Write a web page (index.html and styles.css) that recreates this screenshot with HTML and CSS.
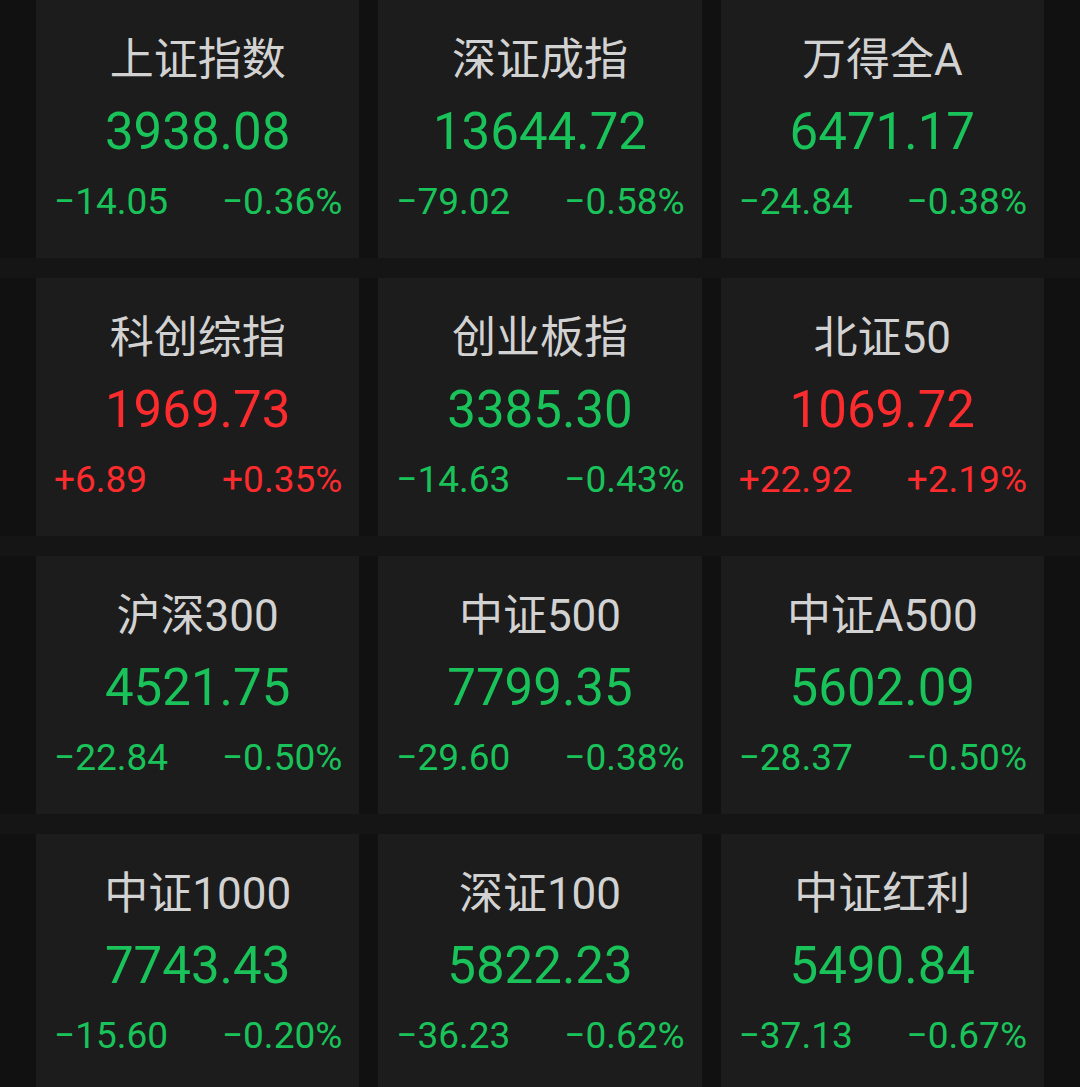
FILE: index.html
```html
<!DOCTYPE html>
<html lang="zh-CN">
<head>
    <meta charset="UTF-8">
    <meta name="viewport" content="width=device-width, initial-scale=1.0">
    <title>指数行情</title>
    <link rel="stylesheet" href="styles.css">
</head>
<body>
    <div class="board">
        <div class="row">
            <div class="card down">
                <div class="name">上证指数</div>
                <div class="price">3938.08</div>
                <div class="change"><span>−14.05</span><span>−0.36%</span></div>
            </div>
            <div class="card down">
                <div class="name">深证成指</div>
                <div class="price">13644.72</div>
                <div class="change"><span>−79.02</span><span>−0.58%</span></div>
            </div>
            <div class="card down">
                <div class="name">万得全A</div>
                <div class="price">6471.17</div>
                <div class="change"><span>−24.84</span><span>−0.38%</span></div>
            </div>
        </div>
        <div class="row">
            <div class="card up">
                <div class="name">科创综指</div>
                <div class="price">1969.73</div>
                <div class="change"><span>+6.89</span><span>+0.35%</span></div>
            </div>
            <div class="card down">
                <div class="name">创业板指</div>
                <div class="price">3385.30</div>
                <div class="change"><span>−14.63</span><span>−0.43%</span></div>
            </div>
            <div class="card up">
                <div class="name">北证50</div>
                <div class="price">1069.72</div>
                <div class="change"><span>+22.92</span><span>+2.19%</span></div>
            </div>
        </div>
        <div class="row">
            <div class="card down">
                <div class="name">沪深300</div>
                <div class="price">4521.75</div>
                <div class="change"><span>−22.84</span><span>−0.50%</span></div>
            </div>
            <div class="card down">
                <div class="name">中证500</div>
                <div class="price">7799.35</div>
                <div class="change"><span>−29.60</span><span>−0.38%</span></div>
            </div>
            <div class="card down">
                <div class="name">中证A500</div>
                <div class="price">5602.09</div>
                <div class="change"><span>−28.37</span><span>−0.50%</span></div>
            </div>
        </div>
        <div class="row">
            <div class="card down">
                <div class="name">中证1000</div>
                <div class="price">7743.43</div>
                <div class="change"><span>−15.60</span><span>−0.20%</span></div>
            </div>
            <div class="card down">
                <div class="name">深证100</div>
                <div class="price">5822.23</div>
                <div class="change"><span>−36.23</span><span>−0.62%</span></div>
            </div>
            <div class="card down">
                <div class="name">中证红利</div>
                <div class="price">5490.84</div>
                <div class="change"><span>−37.13</span><span>−0.67%</span></div>
            </div>
        </div>
    </div>
</body>
</html>
```

FILE: styles.css
```css
body {
    margin: 0;
    background-color: #151515;
    font-family: Roboto, "Noto Sans CJK SC", sans-serif;
    height: 1087px;
    overflow: hidden;
}
.board {
    display: flex;
    flex-direction: column;
    gap: 20px;
}
.row {
    display: grid;
    grid-template-columns: repeat(3, 1fr);
    gap: 19px;
    padding: 0 36px;
    background-color: #111111;
}
.card {
    background-color: #1c1c1c;
    height: 258px;
    box-sizing: border-box;
    padding-top: 30px;
    display: flex;
    flex-direction: column;
    align-items: center;
}
.name {
    color: #d2d2d2;
    font-size: 44px;
    line-height: 60px;
}
.price {
    font-size: 51px;
    line-height: 60px;
    margin-top: 12px;
}
.change {
    align-self: stretch;
    display: flex;
    justify-content: space-between;
    padding: 0 17px 0 18px;
    font-size: 37px;
    line-height: 44px;
    margin-top: 18px;
}
.down .price,
.down .change {
    color: #1ac25a;
}
.up .price,
.up .change {
    color: #fb2b2e;
}
```
